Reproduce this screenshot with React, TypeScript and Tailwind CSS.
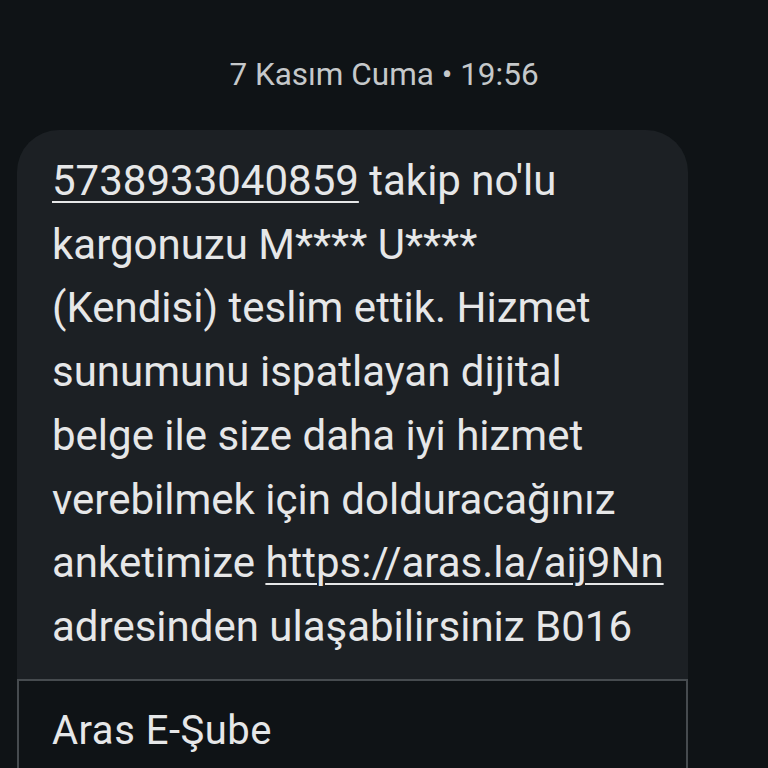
export default function App() {
    const lines: React.ReactNode[] = [
        <>
            <span className="underline decoration-2 underline-offset-[6px]">5738933040859</span> takip no'lu
        </>,
        <>kargonuzu M**** U****</>,
        <>(Kendisi) teslim ettik. Hizmet</>,
        <>sunumunu ispatlayan dijital</>,
        <>belge ile size daha iyi hizmet</>,
        <>verebilmek için dolduracağınız</>,
        <>
            anketimize{' '}
            <span className="underline decoration-2 underline-offset-[6px]">https://aras.la/aij9Nn</span>
        </>,
        <>adresinden ulaşabilirsiniz B016</>,
    ];

    return (
        <div
            className="h-[768px] w-[768px] overflow-hidden bg-[#0f1316]"
            style={{ fontFamily: 'Roboto, "Noto Sans", sans-serif' }}
        >
            <div className="flex h-[130px] items-start justify-center pt-[52px]">
                <span className="text-[31.5px] leading-[46px] text-[#c5c8ca]">7 Kasım Cuma • 19:56</span>
            </div>
            <div className="ml-[17px] w-[671px]">
                <div className="rounded-t-[42px] bg-[#1c2024] pb-[20px] pl-[35px] pt-[19px] text-[42px] leading-[63.7px] text-[#e6e7e8]">
                    {lines.map((line, i) => (
                        <div key={i} className="whitespace-nowrap">
                            {line}
                        </div>
                    ))}
                </div>
                <div className="h-[200px] border-x-2 border-t-2 border-[#464b4f] bg-[#0f1316] pl-[33px] pt-[20px]">
                    <div className="text-[40px] leading-[60px] tracking-[0.5px] text-[#e6e7e8]">Aras E-Şube</div>
                </div>
            </div>
        </div>
    );
}
